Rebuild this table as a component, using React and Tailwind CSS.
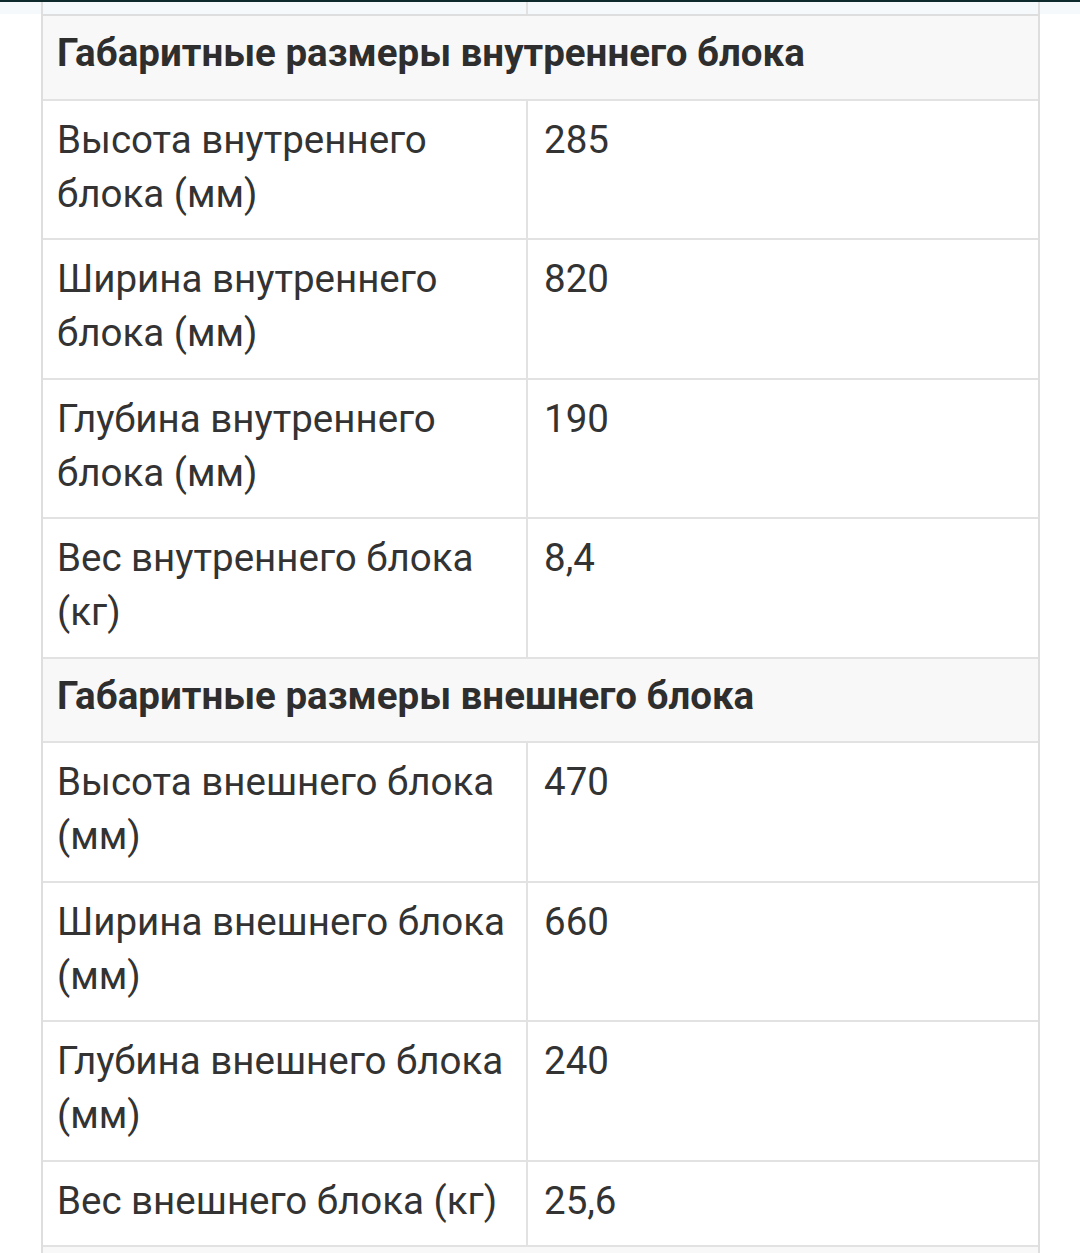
import React from "react";

const sections = [
  {
    title: "Габаритные размеры внутреннего блока",
    rows: [
      ["Высота внутреннего блока (мм)", "285"],
      ["Ширина внутреннего блока (мм)", "820"],
      ["Глубина внутреннего блока (мм)", "190"],
      ["Вес внутреннего блока (кг)", "8,4"],
    ],
  },
  {
    title: "Габаритные размеры внешнего блока",
    rows: [
      ["Высота внешнего блока (мм)", "470"],
      ["Ширина внешнего блока (мм)", "660"],
      ["Глубина внешнего блока (мм)", "240"],
      ["Вес внешнего блока (кг)", "25,6"],
    ],
  },
];

export default function App() {
  return (
    <div className="w-[1080px] h-[1253px] overflow-hidden bg-white font-['Roboto','Noto_Sans',sans-serif] text-[#333333]">
      <div className="h-[2px] bg-[#0e2a2c]" />
      <div className="h-[12px] bg-[#f6f9fc] pl-[41px]">
        <div className="flex h-full w-[999px] border-x-2 border-[#dedede]">
          <div className="w-[485px] border-r-2 border-[#e2e2e2]" />
          <div className="flex-1" />
        </div>
      </div>
      <div className="ml-[41px] w-[999px] border-x-2 border-t-2 border-[#dedede]">
        {sections.map((s) => (
          <React.Fragment key={s.title}>
            <div className="bg-[#f8f8f8] border-b-2 border-[#e2e2e2] pl-[14px] pr-[10px] pt-[10px] pb-[18.5px] text-[38.5px] leading-[54px] font-bold text-[#2e2e2e] whitespace-nowrap">
              {s.title}
            </div>
            {s.rows.map(([k, v]) => (
              <div key={k} className="flex border-b-2 border-[#e2e2e2] bg-white">
                <div className="w-[485px] shrink-0 border-r-2 border-[#e2e2e2] pl-[14px] pr-[12px] pt-[12px] pb-[17.5px] text-[38.5px] leading-[54px]">
                  {k}
                </div>
                <div className="flex-1 pl-[16px] pr-[15px] pt-[12px] pb-[17.5px] text-[38.5px] leading-[54px]">
                  {v}
                </div>
              </div>
            ))}
          </React.Fragment>
        ))}
        <div className="h-[40px] bg-[#f8f8f8]" />
      </div>
    </div>
  );
}
